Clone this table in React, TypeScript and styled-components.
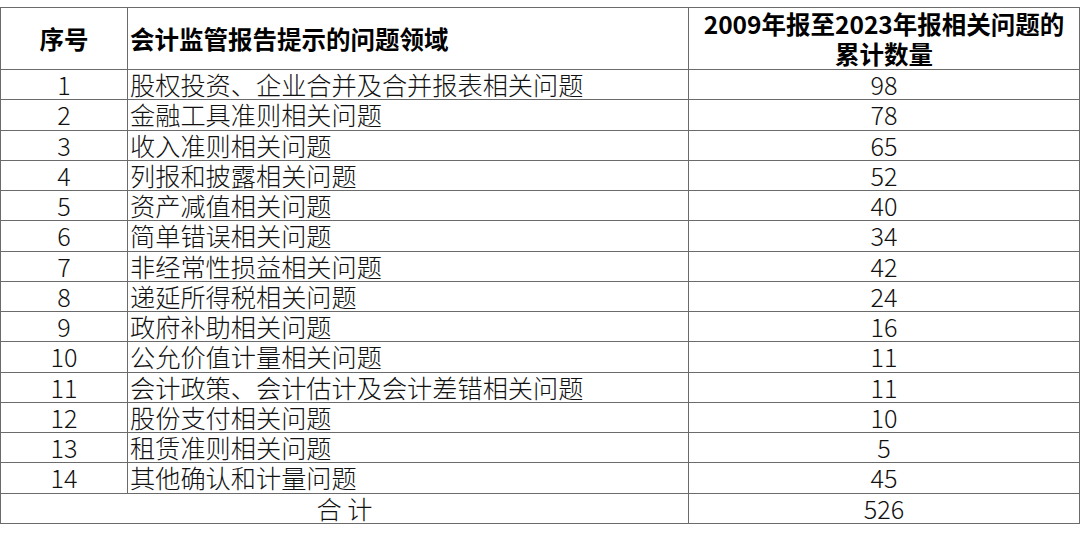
import React from "react";
import styled, { createGlobalStyle } from "styled-components";

const GlobalStyle = createGlobalStyle`
  html, body {
    margin: 0;
    padding: 0;
    background: #fff;
  }
  body {
    font-family: "Noto Sans CJK SC", "Noto Sans", sans-serif;
    color: #111;
  }
`;

const Page = styled.div`
  width: 1080px;
  padding-top: 7px;
`;

const Table = styled.table`
  width: 1079px;
  border-collapse: collapse;
  table-layout: fixed;
  font-size: 25px;
`;

const HeadCell = styled.th<{ $left?: boolean }>`
  height: 61px;
  padding: 0 0 0 ${(p) => (p.$left ? "2px" : "0")};
  border: 1px solid #6b6b6b;
  font-weight: 700;
  font-size: 24.5px;
  line-height: 30px;
  text-align: ${(p) => (p.$left ? "left" : "center")};
  color: #000;
`;

const Cell = styled.td<{ $left?: boolean }>`
  height: 29.25px;
  padding: 0 0 0 ${(p) => (p.$left ? "2px" : "0")};
  border: 1px solid #6b6b6b;
  font-family: "Noto Sans CJK SC Light", "Noto Sans CJK SC DemiLight", "Noto Sans CJK SC", sans-serif;
  font-weight: 300;
  font-size: 25.2px;
  line-height: 29px;
  text-align: ${(p) => (p.$left ? "left" : "center")};
  white-space: nowrap;
  color: #111;
`;

const rows: [string, number][] = [
  ["股权投资、企业合并及合并报表相关问题", 98],
  ["金融工具准则相关问题", 78],
  ["收入准则相关问题", 65],
  ["列报和披露相关问题", 52],
  ["资产减值相关问题", 40],
  ["简单错误相关问题", 34],
  ["非经常性损益相关问题", 42],
  ["递延所得税相关问题", 24],
  ["政府补助相关问题", 16],
  ["公允价值计量相关问题", 11],
  ["会计政策、会计估计及会计差错相关问题", 11],
  ["股份支付相关问题", 10],
  ["租赁准则相关问题", 5],
  ["其他确认和计量问题", 45],
];

export default function App() {
  return (
    <Page>
      <GlobalStyle />
      <Table>
        <colgroup>
          <col style={{ width: 127 }} />
          <col style={{ width: 561 }} />
          <col style={{ width: 391 }} />
        </colgroup>
        <thead>
          <tr>
            <HeadCell>序号</HeadCell>
            <HeadCell $left>会计监管报告提示的问题领域</HeadCell>
            <HeadCell>
              2009年报至2023年报相关问题的
              <br />
              累计数量
            </HeadCell>
          </tr>
        </thead>
        <tbody>
          {rows.map((r, i) => (
            <tr key={i}>
              <Cell>{i + 1}</Cell>
              <Cell $left>{r[0]}</Cell>
              <Cell>{r[1]}</Cell>
            </tr>
          ))}
          <tr>
            <Cell colSpan={2}>合 计</Cell>
            <Cell>526</Cell>
          </tr>
        </tbody>
      </Table>
    </Page>
  );
}
